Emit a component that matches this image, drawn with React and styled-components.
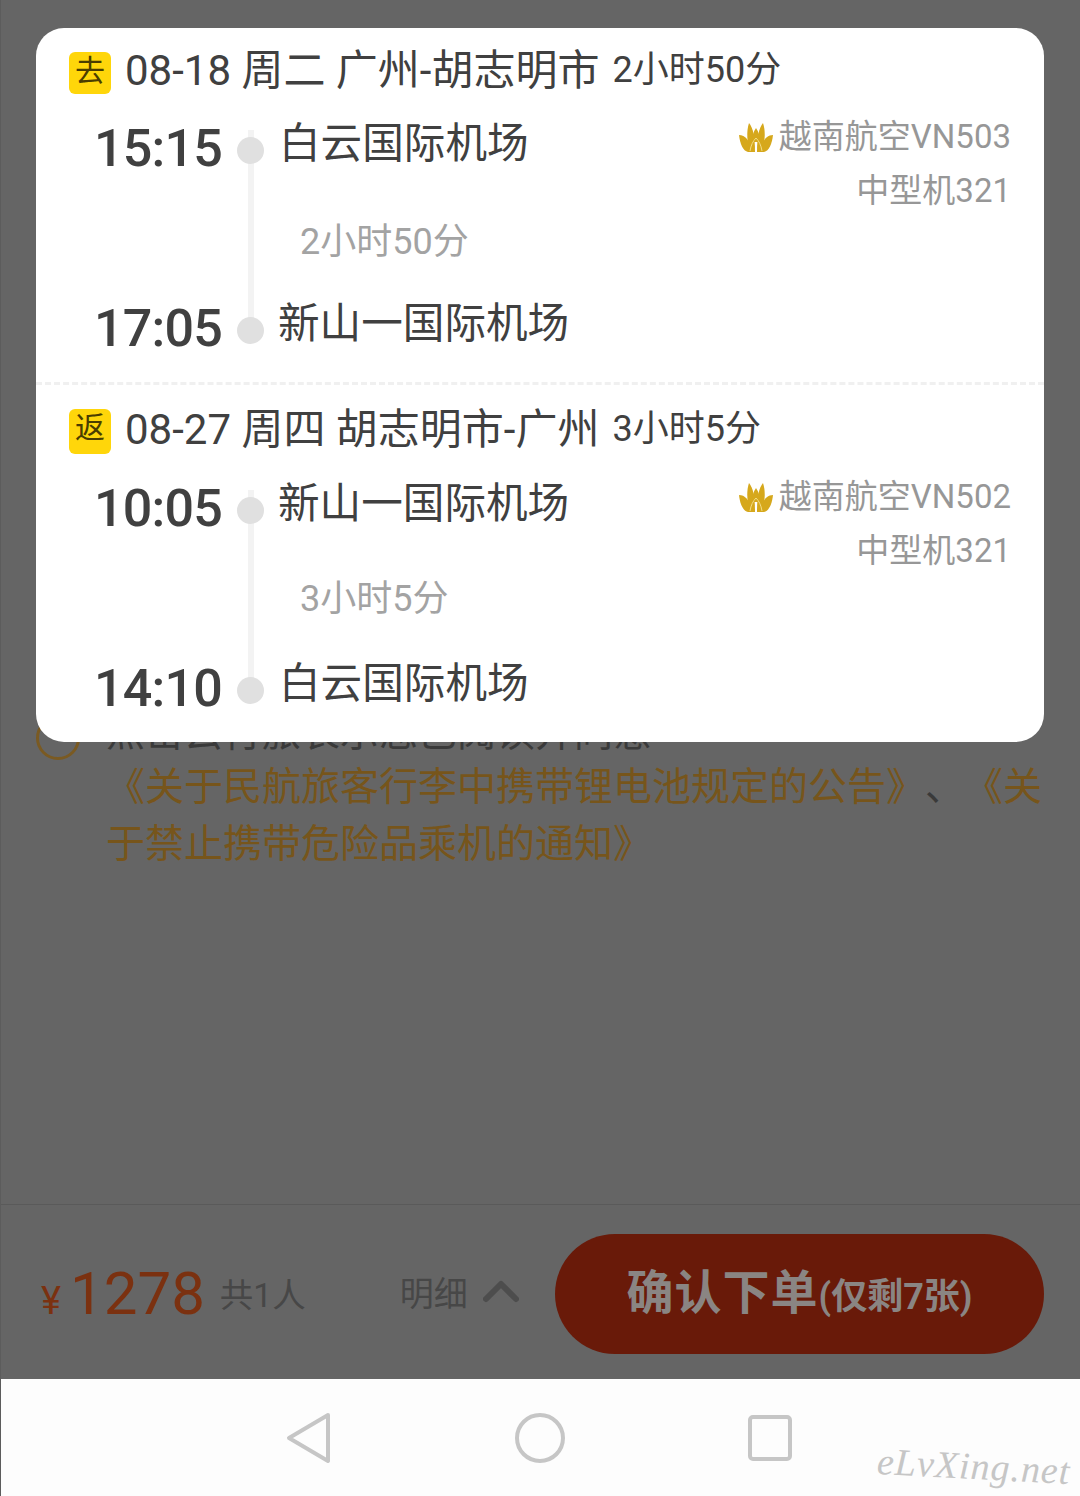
import React from "react";
import styled, { createGlobalStyle } from "styled-components";

const sans = `Roboto, "Noto Sans CJK SC", sans-serif`;

const GlobalStyle = createGlobalStyle`
	html, body {
		margin: 0;
		padding: 0;
		background: #656565;
	}
	body {
		font-family: ${sans};
		text-spacing-trim: space-all;
	}
`;

const Screen = styled.div`
	position: relative;
	width: 1080px;
	height: 1496px;
	box-sizing: border-box;
	border-left: 1px solid #5c5c5c;
	overflow: hidden;
	display: flex;
	flex-direction: column;
	background: #656565;
`;

const Content = styled.div`
	flex: 1;
	padding: 708px 36px 0 35px;
	box-sizing: border-box;
`;

const Notice = styled.div`
	display: flex;
	gap: 26px;
	align-items: flex-start;
`;

const CheckCircle = styled.div`
	flex: none;
	width: 44px;
	height: 44px;
	box-sizing: border-box;
	margin-top: 8px;
	border: 3px solid #7a5a22;
	border-radius: 50%;
`;

const NoticeText = styled.div`
	font-size: 39px;
	line-height: 57px;
	color: #3a3a3a;
`;

const NoticeLead = styled.div`
	line-height: 51px;
`;

const LegalLink = styled.span`
	color: #77551b;
`;

const BottomBar = styled.div`
	height: 175px;
	flex: none;
	box-sizing: border-box;
	border-top: 1px solid #5a5a5a;
	display: flex;
	align-items: center;
	padding: 4px 36px 0 40px;
`;

const Price = styled.div`
	display: flex;
	align-items: baseline;
	margin-bottom: 2px;
	color: #7b3110;
`;

const Yen = styled.span`
	font-size: 38px;
	margin-right: 9px;
`;

const Amount = styled.span`
	font-size: 60px;
`;

const People = styled.span`
	margin: 0 0 4px 15px;
	font-size: 33.5px;
	color: #474747;
`;

const Detail = styled.div`
	margin: 0 0 6px 94px;
	display: flex;
	align-items: center;
	gap: 15px;
	font-size: 34px;
	color: #474747;
`;

const Order = styled.div`
	margin-left: auto;
	width: 489px;
	height: 120px;
	border-radius: 60px;
	background: #691a09;
	color: #8a8583;
	display: flex;
	align-items: baseline;
	justify-content: center;
	line-height: 118px;
	font-weight: 700;
`;

const OrderMain = styled.span`
	font-size: 47px;
	letter-spacing: 1px;
`;

const OrderSub = styled.span`
	font-size: 36px;
`;

const NavBar = styled.div`
	position: relative;
	height: 117px;
	flex: none;
	box-sizing: border-box;
	padding-right: 4px;
	background: #fdfdfd;
	display: flex;
	align-items: center;
	justify-content: center;
	gap: 183px;
`;

const Watermark = styled.div`
	position: absolute;
	right: 9px;
	bottom: 8px;
	font-family: "Liberation Serif", serif;
	font-style: italic;
	font-size: 38px;
	letter-spacing: 1px;
	color: #c6c6c6;
	transform: rotate(3deg);
`;

const Card = styled.div`
	position: absolute;
	left: 35px;
	top: 28px;
	width: 1008px;
	height: 714px;
	background: #fff;
	border-radius: 28px;
	overflow: hidden;
`;

const Leg = styled.section`
	height: ${(p) => p.$height}px;
	box-sizing: border-box;
	padding-top: 24px;
`;

const Divider = styled.div`
	border-top: 3px dashed #f0f0f0;
`;

const LegHeader = styled.div`
	display: flex;
	align-items: flex-start;
	padding-left: 33px;
	height: 44px;
	color: #404040;
`;

const Badge = styled.span`
	flex: none;
	width: 42px;
	height: ${(p) => p.$height}px;
	border-radius: 6px;
	background: #ffd60a;
	color: #4a3d00;
	font-size: 30px;
	line-height: 37px;
	text-align: center;
	margin-right: 14px;
`;

const LegRoute = styled.span`
	margin-top: ${(p) => p.$top}px;
	font-size: 42px;
	line-height: 38px;
`;

const LegTime = styled.span`
	margin: ${(p) => p.$top}px 0 0 13px;
	font-size: 36px;
	line-height: 36px;
`;

const Timeline = styled.div`
	position: relative;
	padding: 0 33px 0 58px;
	margin-top: ${(p) => p.$gap}px;
`;

const Rail = styled.div`
	position: absolute;
	left: 212px;
	top: 17px;
	height: 200px;
	width: 6px;
	background: #f3f3f3;
`;

const Stop = styled.div`
	display: flex;
	align-items: flex-start;
	height: 60px;
`;

const Clock = styled.div`
	width: 129px;
	font-size: 52px;
	font-weight: 500;
	line-height: 60px;
	margin-top: 6px;
	color: #404040;
	letter-spacing: -0.8px;
`;

const Dot = styled.div`
	position: relative;
	width: 27px;
	height: 27px;
	margin: 24px 0 0 14px;
	border-radius: 50%;
	background: #e0e0e0;
`;

const Airport = styled.div`
	margin: 3px 0 0 ${(p) => p.$inset}px;
	font-size: 41.6px;
	line-height: 56px;
	color: #404040;
`;

const Carrier = styled.div`
	margin: 1px 0 0 auto;
	display: flex;
	align-items: center;
	gap: 6px;
	font-size: 33px;
	line-height: 46px;
	color: #979797;
`;

const Duration = styled.div`
	height: 120px;
	display: flex;
	justify-content: space-between;
	align-items: flex-start;
	padding-left: 206px;
	font-size: 36px;
	color: #a3a3a3;
	line-height: 60px;
`;

const DurationText = styled.div`
	padding-top: ${(p) => p.$top}px;
`;

const Aircraft = styled.div`
	margin-top: -5px;
	font-size: 33px;
	line-height: 46px;
	color: #979797;
`;

const Lotus = () => (
	<svg width="34" height="32" viewBox="0 0 34 32">
		<g fill="#d6a81c">
			<path d="M0 14c6 0 11 5 13 17H9C4 30 1 23 0 14z" />
			<path d="M34 14c-6 0-11 5-13 17h4c5-1 8-8 9-17z" />
			<path d="M10 2c4 5 6 13 6 29h-4C8 23 7 11 10 2z" />
			<path d="M24 2c-4 5-6 13-6 29h4c4-8 5-20 2-29z" />
			<path d="M17 7c3 4 4 9 4 14H13c0-5 1-10 4-14z" />
		</g>
		<path d="M11 30c1-6 3-10 6-13 3 3 5 7 6 13" fill="none" stroke="#f2dd86" strokeWidth="1" />
	</svg>
);

const Chevron = () => (
	<svg width="36" height="24" viewBox="0 0 36 24">
		<path d="M3 20 18 5l15 15" fill="none" stroke="#4d4d4d" strokeWidth="6" strokeLinecap="round" strokeLinejoin="round" />
	</svg>
);

const BackIcon = () => (
	<svg width="46" height="52" viewBox="0 0 46 52">
		<path d="M42 3 3 26l39 23z" fill="none" stroke="#c6c6c6" strokeWidth="4" strokeLinejoin="round" />
	</svg>
);

const HomeIcon = () => (
	<svg width="50" height="50" viewBox="0 0 50 50">
		<circle cx="25" cy="25" r="23" fill="none" stroke="#c6c6c6" strokeWidth="4" />
	</svg>
);

const RecentIcon = () => (
	<svg width="44" height="46" viewBox="0 0 44 46">
		<rect x="2" y="2" width="40" height="42" rx="3" fill="none" stroke="#c6c6c6" strokeWidth="4" />
	</svg>
);

const legs = [
	{
		badge: "去",
		badgeHeight: 42,
		route: "08-18 周二 广州-胡志明市",
		time: "2小时50分",
		from: { clock: "15:15", name: "白云国际机场", inset: 15 },
		to: { clock: "17:05", name: "新山一国际机场", inset: 14 },
		flight: "越南航空VN503",
		height: 354,
		gap: 17,
		textTop: 0,
		durationTop: 39,
	},
	{
		badge: "返",
		badgeHeight: 45,
		route: "08-27 周四 胡志明市-广州",
		time: "3小时5分",
		from: { clock: "10:05", name: "新山一国际机场", inset: 14 },
		to: { clock: "14:10", name: "白云国际机场", inset: 15 },
		flight: "越南航空VN502",
		height: 356,
		gap: 20,
		textTop: 2,
		durationTop: 36,
	},
];

const App = () => {
	return (
		<Screen>
			<GlobalStyle />
			<Content>
				<Notice>
					<CheckCircle />
					<NoticeText>
						<NoticeLead>点击云行旅表示您已阅读并同意</NoticeLead>
						<LegalLink>《关于民航旅客行李中携带锂电池规定的公告》</LegalLink>、
						<LegalLink>《关于禁止携带危险品乘机的通知》</LegalLink>
					</NoticeText>
				</Notice>
			</Content>
			<BottomBar>
				<Price>
					<Yen>¥</Yen>
					<Amount>1278</Amount>
				</Price>
				<People>共1人</People>
				<Detail>
					明细
					<Chevron />
				</Detail>
				<Order>
					<OrderMain>确认下单</OrderMain>
					<OrderSub>(仅剩7张)</OrderSub>
				</Order>
			</BottomBar>
			<NavBar>
				<BackIcon />
				<HomeIcon />
				<RecentIcon />
				<Watermark>eLvXing.net</Watermark>
			</NavBar>
			<Card>
				{legs.map((leg, i) => (
					<React.Fragment key={leg.badge}>
						{i > 0 && <Divider />}
						<Leg $height={leg.height}>
							<LegHeader>
								<Badge $height={leg.badgeHeight}>{leg.badge}</Badge>
								<LegRoute $top={leg.textTop}>{leg.route}</LegRoute>
								<LegTime $top={leg.textTop}>{leg.time}</LegTime>
							</LegHeader>
							<Timeline $gap={leg.gap}>
								<Rail />
								<Stop>
									<Clock>{leg.from.clock}</Clock>
									<Dot />
									<Airport $inset={leg.from.inset}>{leg.from.name}</Airport>
									<Carrier>
										<Lotus />
										{leg.flight}
									</Carrier>
								</Stop>
								<Duration>
									<DurationText $top={leg.durationTop}>{leg.time}</DurationText>
									<Aircraft>中型机321</Aircraft>
								</Duration>
								<Stop>
									<Clock>{leg.to.clock}</Clock>
									<Dot />
									<Airport $inset={leg.to.inset}>{leg.to.name}</Airport>
								</Stop>
							</Timeline>
						</Leg>
					</React.Fragment>
				))}
			</Card>
		</Screen>
	);
};

export default App;
